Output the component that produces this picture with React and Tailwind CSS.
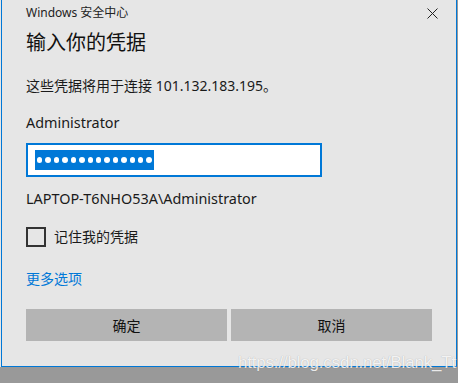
import React from "react";

const font = { fontFamily: '"Segoe UI", "Noto Sans", "Noto Sans CJK SC", sans-serif' };

export default function App() {
    return (
        <div className="relative w-[458px] h-[383px] bg-[#999999] overflow-hidden" style={font}>
            <div className="h-[367px] pl-px bg-[#e6e6e6] w-[457px]">
                <div className="h-full border-l border-r border-b border-[#0078d7] bg-[#e6e6e6] text-[#1a1a1a] flex flex-col pl-[24px] pr-[24px]">
                    {/* title bar */}
                    <div className="flex items-center justify-between h-[25px] pt-[1px]">
                        <span className="text-[12px] text-[#222]">Windows 安全中心</span>
                        <svg className="w-[11px] h-[11px] mr-[-6px]" viewBox="0 0 11 11">
                            <path d="M0.5 0.5 L10.5 10.5 M10.5 0.5 L0.5 10.5" stroke="#222" strokeWidth="1" />
                        </svg>
                    </div>

                    <h1 className="text-[20px] leading-[28px] mt-[4px] text-[#111]">输入你的凭据</h1>

                    <p className="text-[14px] leading-[20px] mt-[19px]">这些凭据将用于连接 101.132.183.195。</p>

                    <p className="text-[14.4px] leading-[20px] mt-[17px]">Administrator</p>

                    <div className="mt-[10px] w-[296px] h-[34px] border-2 border-[#0078d7] bg-white flex items-center pl-[7px]">
                        <div className="h-[20px] w-[119px] bg-[#0078d7] flex items-center gap-[3px] px-[2px]">
                            {Array.from({ length: 14 }).map((_, i) => (
                                <span key={i} className="w-[6px] h-[6px] rounded-full bg-white" />
                            ))}
                        </div>
                    </div>

                    <p className="text-[14.4px] leading-[20px] mt-[12px]">LAPTOP-T6NHO53A\Administrator</p>

                    <div className="flex items-center mt-[18px]">
                        <span className="w-[20px] h-[20px] border-2 border-[#333] box-border" />
                        <span className="text-[14px] leading-[20px] ml-[8px]">记住我的凭据</span>
                    </div>

                    <a className="text-[14px] leading-[20px] mt-[22px] text-[#0078d7]">更多选项</a>

                    <div className="flex gap-[4px] mt-[20px]">
                        <button className="w-[201px] h-[32px] bg-[#b4b4b4] text-[14px] text-[#111]">确定</button>
                        <button className="w-[201px] h-[32px] bg-[#b4b4b4] text-[14px] text-[#111]">取消</button>
                    </div>
                </div>
            </div>

            <span
                className="absolute left-[238px] top-[350px] text-[17px] text-white/85 tracking-[-0.2px]"
                style={{ fontFamily: '"Liberation Sans", Arial, sans-serif', textShadow: "0 0 1px rgba(0,0,0,0.3)" }}
            >
                https://blog.csdn.net/Blank_Tt
            </span>
        </div>
    );
}
